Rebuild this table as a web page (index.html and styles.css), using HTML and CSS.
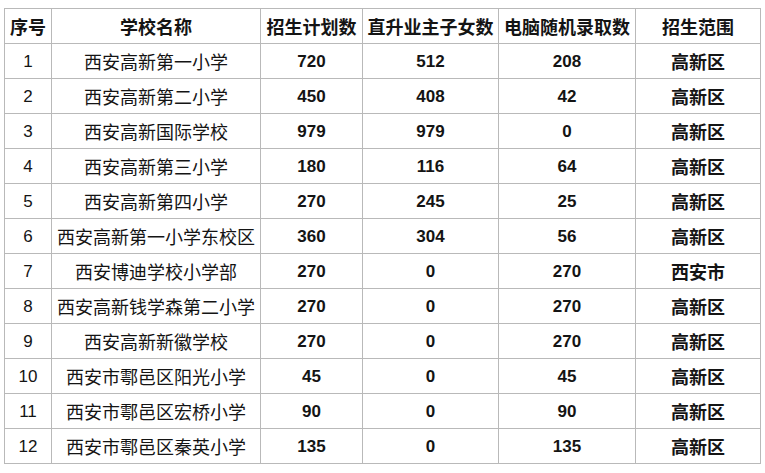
FILE: index.html
```html
<!DOCTYPE html>
<html lang="zh-CN">
<head>
<meta charset="utf-8">
<title>招生计划</title>
<link rel="stylesheet" href="styles.css">
</head>
<body>
<table class="plan">
  <colgroup>
    <col class="c1"><col class="c2"><col class="c3"><col class="c4"><col class="c5"><col class="c6">
  </colgroup>
  <thead>
    <tr><th>序号</th><th>学校名称</th><th>招生计划数</th><th>直升业主子女数</th><th>电脑随机录取数</th><th>招生范围</th></tr>
  </thead>
  <tbody>
    <tr><td class="idx">1</td><td class="name">西安高新第一小学</td><td class="num">720</td><td class="num">512</td><td class="num">208</td><td class="area">高新区</td></tr>
    <tr><td class="idx">2</td><td class="name">西安高新第二小学</td><td class="num">450</td><td class="num">408</td><td class="num">42</td><td class="area">高新区</td></tr>
    <tr><td class="idx">3</td><td class="name">西安高新国际学校</td><td class="num">979</td><td class="num">979</td><td class="num">0</td><td class="area">高新区</td></tr>
    <tr><td class="idx">4</td><td class="name">西安高新第三小学</td><td class="num">180</td><td class="num">116</td><td class="num">64</td><td class="area">高新区</td></tr>
    <tr><td class="idx">5</td><td class="name">西安高新第四小学</td><td class="num">270</td><td class="num">245</td><td class="num">25</td><td class="area">高新区</td></tr>
    <tr><td class="idx">6</td><td class="name">西安高新第一小学东校区</td><td class="num">360</td><td class="num">304</td><td class="num">56</td><td class="area">高新区</td></tr>
    <tr><td class="idx">7</td><td class="name">西安博迪学校小学部</td><td class="num">270</td><td class="num">0</td><td class="num">270</td><td class="area">西安市</td></tr>
    <tr><td class="idx">8</td><td class="name">西安高新钱学森第二小学</td><td class="num">270</td><td class="num">0</td><td class="num">270</td><td class="area">高新区</td></tr>
    <tr><td class="idx">9</td><td class="name">西安高新新徽学校</td><td class="num">270</td><td class="num">0</td><td class="num">270</td><td class="area">高新区</td></tr>
    <tr><td class="idx">10</td><td class="name">西安市鄠邑区阳光小学</td><td class="num">45</td><td class="num">0</td><td class="num">45</td><td class="area">高新区</td></tr>
    <tr><td class="idx">11</td><td class="name">西安市鄠邑区宏桥小学</td><td class="num">90</td><td class="num">0</td><td class="num">90</td><td class="area">高新区</td></tr>
    <tr><td class="idx">12</td><td class="name">西安市鄠邑区秦英小学</td><td class="num">135</td><td class="num">0</td><td class="num">135</td><td class="area">高新区</td></tr>
  </tbody>
</table>
</body>
</html>
```
FILE: styles.css
```css
html, body {
  margin: 0;
  padding: 0;
  background: #ffffff;
}
body {
  padding: 8px 0 0 4px;
  font-family: "Liberation Sans", "Noto Sans CJK SC", sans-serif;
  color: #141414;
}
.plan {
  border-collapse: collapse;
  table-layout: fixed;
  width: 756px;
}
.c1 { width: 47px; }
.c2 { width: 209px; }
.c3 { width: 102px; }
.c4 { width: 136px; }
.c5 { width: 137px; }
.c6 { width: 125px; }
.plan th, .plan td {
  border: 1px solid #b9b9b9;
  height: 34px;
  padding: 0;
  text-align: center;
  vertical-align: middle;
  white-space: nowrap;
  line-height: 1;
}
.plan th {
  font-family: "Noto Sans CJK SC", sans-serif;
  font-size: 18px;
  font-weight: 700;
}
.idx {
  font-size: 17px;
  font-weight: 400;
}
.name {
  font-family: "Noto Sans CJK SC", sans-serif;
  font-size: 18px;
  font-weight: 400;
}
.num {
  font-size: 17px;
  font-weight: 700;
}
.area {
  font-family: "Noto Sans CJK SC", sans-serif;
  font-size: 18px;
  font-weight: 700;
}
```
